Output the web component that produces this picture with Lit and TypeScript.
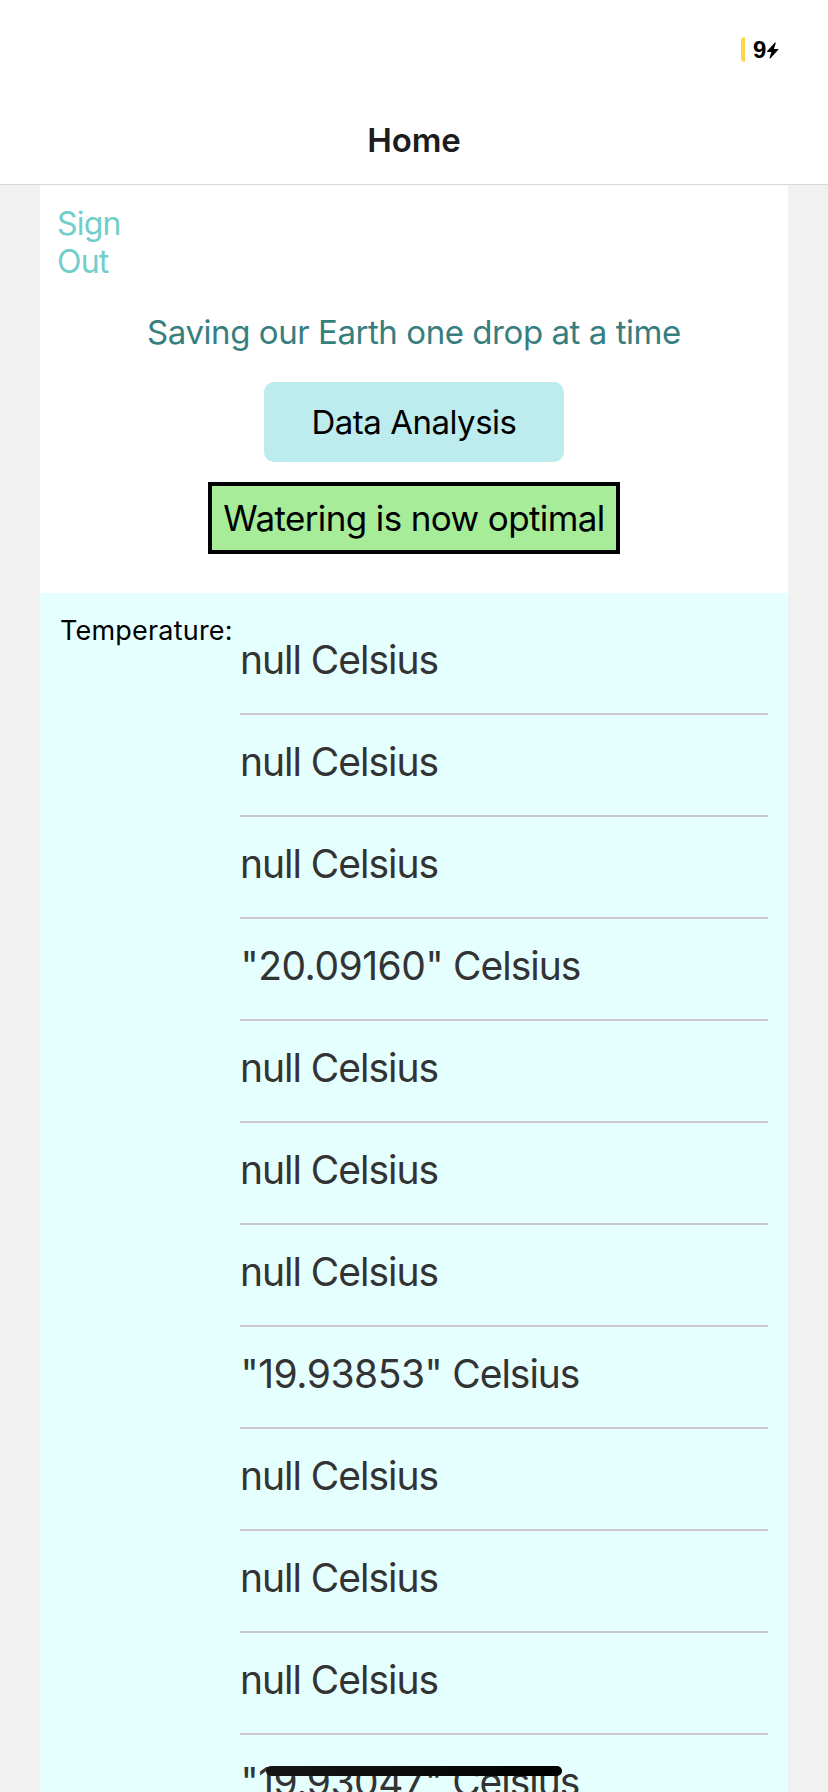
import { LitElement, html, css } from "lit";
import { customElement, property } from "lit/decorators.js";

@customElement("status-bar")
export class StatusBar extends LitElement {
  static styles = css`
    :host {
      display: flex;
      justify-content: flex-end;
      align-items: center;
      box-sizing: border-box;
      height: 96px;
      padding: 3px 48px 0 0;
    }
    .level {
      width: 4px;
      height: 25px;
      border-radius: 4px 0 0 4px;
      background: #fbd64a;
      margin-right: 8px;
    }
    .percent {
      width: 14px;
      font: bold 24px/26px "Liberation Sans", sans-serif;
      color: #000;
    }
    svg {
      display: block;
      margin-top: 1px;
    }
  `;
  render() {
    return html`
      <div class="level"></div>
      <div class="percent">9</div>
      <svg width="13" height="17" viewBox="0 0 13 17">
        <path
          d="M7.9 0.5 0.2 9Q-0.2 9.9 0.6 10H4.4L2.5 15.8Q2.6 16.8 3.5 16.3L11.3 7.8Q11.8 7 10.9 6.9H6.9L8.8 1.1Q8.8 0.1 7.9 0.5Z"
          fill="#000"
        />
      </svg>
    `;
  }
}

@customElement("reading-row")
export class ReadingRow extends LitElement {
  @property() value = "null";
  static styles = css`
    :host {
      display: block;
      height: 100px;
      border-bottom: 2px solid #c9c8ca;
      font-size: 39px;
      line-height: 94px;
      letter-spacing: -1.02px;
      color: #333;
      white-space: nowrap;
    }
    .quoted {
      letter-spacing: -0.48px;
      padding-left: 0.5px;
    }
  `;
  render() {
    return html`<span class=${this.value === "null" ? "plain" : "quoted"}>${this.value}</span> Celsius`;
  }
}

@customElement("app-root")
export class AppRoot extends LitElement {
  static styles = css`
    :host {
      display: block;
      position: relative;
      height: 1792px;
      overflow: hidden;
      background: #f1f1f1;
      font-family: Inter, "Noto Sans", sans-serif;
    }
    .header {
      background: #fff;
      border-bottom: 1px solid #d8d8d8;
    }
    .title {
      height: 88px;
      font-size: 33px;
      font-weight: 600;
      line-height: 88px;
      letter-spacing: -0.13px;
      text-align: center;
      color: #1c1c1e;
    }
    .content {
      margin: 0 40px;
    }
    .intro {
      display: flex;
      flex-direction: column;
      align-items: center;
      box-sizing: border-box;
      height: 408px;
      padding-top: 20px;
      background: #fff;
    }
    .signout {
      align-self: flex-start;
      width: 70px;
      margin-left: 17px;
      font-size: 32px;
      line-height: 38px;
      letter-spacing: -0.8px;
      color: #72cecb;
    }
    .tagline {
      margin-top: 31px;
      font-size: 33px;
      line-height: 40px;
      letter-spacing: -0.44px;
      color: #377e7f;
    }
    .analysis {
      width: 300px;
      height: 80px;
      margin-top: 30px;
      border-radius: 10px;
      background: #bcecee;
      font-size: 33px;
      line-height: 80px;
      letter-spacing: -0.5px;
      text-align: center;
      color: #000;
    }
    .status {
      box-sizing: border-box;
      width: 412px;
      height: 72px;
      margin-top: 20px;
      border: 4px solid #000;
      background: #a6ec99;
      font-size: 35px;
      line-height: 64px;
      letter-spacing: -0.615px;
      text-align: center;
      color: #000;
    }
    .readings {
      display: flex;
      box-sizing: border-box;
      padding: 20px 20px 0;
      background: #e5ffff;
    }
    .label {
      width: 180px;
      flex: none;
      font-size: 27px;
      line-height: 36px;
      letter-spacing: 0.2px;
      color: #000;
    }
    .list {
      flex: 1;
    }
    .home-indicator {
      position: absolute;
      left: 266px;
      top: 1766px;
      width: 296px;
      height: 10px;
      border-radius: 5px;
      background: linear-gradient(90deg, #161616, #000);
    }
  `;

  values = [
    "null", "null", "null", '"20.09160"', "null", "null",
    "null", '"19.93853"', "null", "null", "null", '"19.93047"',
  ];

  render() {
    return html`
      <div class="header">
        <status-bar></status-bar>
        <div class="title">Home</div>
      </div>
      <div class="content">
        <div class="intro">
          <div class="signout">Sign Out</div>
          <div class="tagline">Saving our Earth one drop at a time</div>
          <div class="analysis">Data Analysis</div>
          <div class="status">Watering is now optimal</div>
        </div>
        <div class="readings">
          <div class="label">Temperature:</div>
          <div class="list">
            ${this.values.map((v) => html`<reading-row .value=${v}></reading-row>`)}
          </div>
        </div>
      </div>
      <div class="home-indicator"></div>
    `;
  }
}
